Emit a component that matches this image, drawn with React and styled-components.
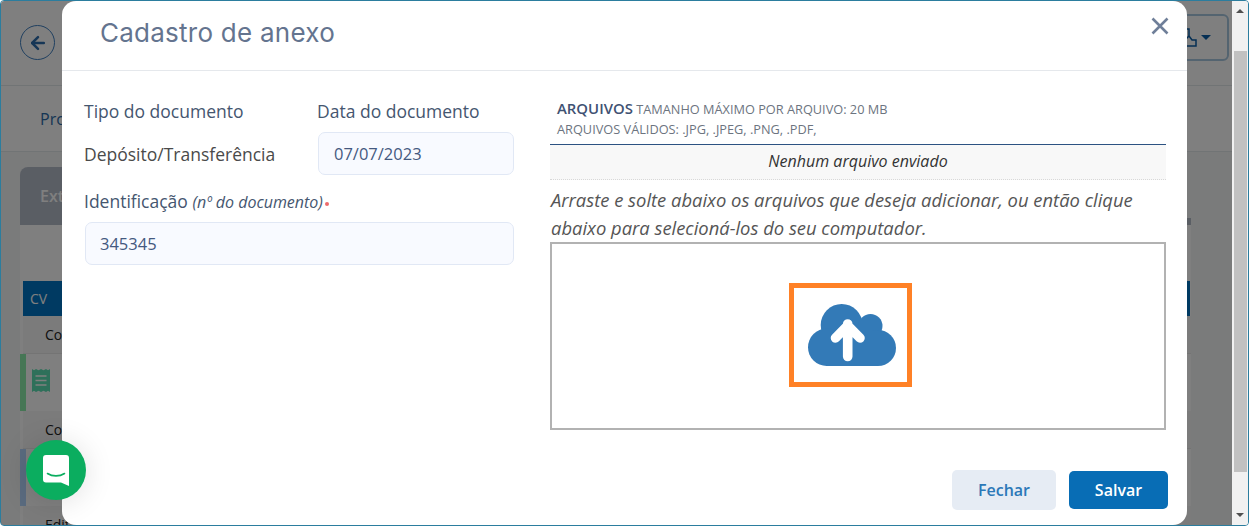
import React from 'react';
import styled, { createGlobalStyle } from 'styled-components';
import { ArrowLeft } from 'lucide-react';

const GlobalStyle = createGlobalStyle`
  html, body {
    margin: 0;
    padding: 0;
    height: 100%;
    overflow: hidden;
    background: #fff;
    font-family: 'Open Sans', sans-serif;
  }
  * { box-sizing: border-box; }
`;

const Frame = styled.div`
  position: relative;
  width: 1249px;
  height: 526px;
  display: flex;
  border: 1px solid #2b7d9e;
  border-radius: 4px;
  overflow: hidden;
  background: #f4f6f6;
`;

const Page = styled.div`
  flex: 1;
  min-width: 0;
  display: flex;
  flex-direction: column;
`;

const TopBar = styled.div`
  height: 85px;
  flex: none;
  display: flex;
  align-items: center;
  justify-content: space-between;
  padding: 0 3px 0 19px;
  background: #fff;
  border-bottom: 1px solid #e2e8ea;
`;

const BackButton = styled.div`
  width: 35px;
  height: 35px;
  margin-top: -1px;
  border: 1px solid #3f7fc0;
  border-radius: 50%;
  display: flex;
  align-items: center;
  justify-content: center;
  color: #2d6cac;
`;

const ToolButton = styled.div`
  width: 100px;
  height: 47px;
  margin-top: -11px;
  border: 2px solid #a9c8e0;
  border-radius: 6px;
  display: flex;
  align-items: center;
  justify-content: flex-end;
  gap: 4px;
  padding-right: 16px;
  color: #0a5ea8;
`;

const Caret = styled.span`
  width: 0;
  height: 0;
  border-left: 5px solid transparent;
  border-right: 5px solid transparent;
  border-top: 5px solid currentColor;
`;

const TabBar = styled.div`
  height: 66px;
  flex: none;
  display: flex;
  align-items: center;
  padding-left: 39px;
  font-size: 16px;
  color: #2c6aa8;
  background: #fff;
  border-bottom: 1px solid #e2e8ea;
`;

const Content = styled.div`
  padding: 15px 41px 0 19px;
  flex: 1;
  min-height: 0;
`;

const Card = styled.div`
  background: #fff;
  border-radius: 8px 8px 0 0;
  height: 400px;
`;

const CardTop = styled.div`
  height: 58px;
  display: flex;
  justify-content: space-between;
  align-items: flex-end;
  background: #f4f6f6;
`;

const CardHead = styled.div`
  width: 900px;
  height: 58px;
  display: flex;
  align-items: center;
  padding-left: 20px;
  background: #b4bcc9;
  border-radius: 8px 8px 0 0;
  font-size: 16px;
  font-weight: 600;
  color: #fff;
`;

const CardHeadEnd = styled.div`
  width: 8px;
  height: 7px;
  background: #b4bcc9;
`;

const TableHead = styled.div`
  height: 35px;
  margin: 56px 1px 0 3px;
  padding-left: 7px;
  display: flex;
  align-items: center;
  background: #0075c4;
  color: #fff;
  font-size: 14px;
`;

const SubRow = styled.div`
  height: 38px;
  margin-left: 3px;
  padding-left: 22px;
  display: flex;
  align-items: center;
  font-size: 14px;
  color: #222;
  background: #f7f7f7;
  border-bottom: 1px solid #e8e8e8;
`;

const StatusRow = styled.div`
  height: 57px;
  padding: 15px 0 0 6px;
  background: #fff;
  border-left: 6px solid ${p => p.$color};
  color: ${p => p.$icon};
`;

const ScrollBar = styled.div`
  width: 16px;
  flex: none;
  display: flex;
  flex-direction: column;
  align-items: center;
  background: #f1f1f1;
`;

const ScrollArrow = styled.span`
  width: 0;
  height: 0;
  margin: ${p => (p.$up ? '8px 0' : 'auto 0 8px')};
  border-left: 4px solid transparent;
  border-right: 4px solid transparent;
  border-${p => (p.$up ? 'bottom' : 'top')}: 4px solid #505050;
`;

const ScrollThumb = styled.div`
  width: 13px;
  height: 421px;
  margin-top: 30px;
  background: #c1c1c1;
`;

const Overlay = styled.div`
  position: absolute;
  inset: 0 16px 0 0;
  background: rgba(0, 0, 0, 0.5);
`;

const Modal = styled.div`
  position: absolute;
  top: 0;
  left: 61px;
  width: 1125px;
  height: 524px;
  display: flex;
  flex-direction: column;
  background: #fff;
  border-radius: 14px;
`;

const ModalHeader = styled.div`
  height: 70px;
  flex: none;
  display: flex;
  align-items: center;
  justify-content: space-between;
  padding: 0 18px 6px 38px;
  border-bottom: 1px solid #e5e8ec;
`;

const ModalTitle = styled.h1`
  margin: 0;
  font-family: Inter, sans-serif;
  font-size: 26px;
  font-weight: 400;
  letter-spacing: 0.25px;
  color: #64748f;
`;

const CloseButton = styled.div`
  display: flex;
  margin-bottom: 14px;
`;

const ModalBody = styled.div`
  flex: 1;
  min-height: 0;
  display: flex;
  gap: 36px;
  padding: 21px 21px 0 22px;
`;

const FormColumn = styled.div`
  width: 430px;
  flex: none;
  padding-top: 8px;
`;

const FormGrid = styled.div`
  display: grid;
  grid-template-columns: 233px 197px;
  grid-template-rows: 32px 43px;
`;

const Label = styled.div`
  font-size: 17.5px;
  line-height: 22px;
  color: #45566f;
  white-space: nowrap;
`;

const StaticValue = styled.div`
  align-self: center;
  font-size: 17.5px;
  color: #4a4a4a;
`;

const Hint = styled.span`
  font-size: 16px;
  font-style: italic;
`;

const Required = styled.span`
  display: inline-block;
  width: 4px;
  height: 4px;
  margin-left: 2px;
  vertical-align: 2px;
  border-radius: 50%;
  background: #ee6b6b;
`;

const Input = styled.input`
  display: block;
  width: 100%;
  height: 43px;
  padding: 0 15px;
  border: 1px solid #e1e8f5;
  border-radius: 7px;
  background: #f8faff;
  font-family: 'Open Sans', sans-serif;
  font-size: 16.5px;
  color: #44597f;
  outline: none;
`;

const DateInput = styled(Input)`
  width: 196px;
  margin-left: 1px;
`;

const IdField = styled.div`
  margin-top: 15px;
  & ${Label} { margin-bottom: 9px; }
  & ${Input} { width: 429px; margin-left: 1px; padding-left: 14px; }
`;

const FilesColumn = styled.div`
  flex: 1;
  min-width: 0;
`;

const FilesInfo = styled.div`
  padding: 6px 0 5px 7px;
  border-bottom: 1px solid #2c5282;
  font-size: 12.75px;
  line-height: 20px;
  color: #6c7480;
`;

const FilesTitle = styled.strong`
  font-size: 14.9px;
  font-weight: 600;
  color: #3f5273;
`;

const EmptyNote = styled.div`
  height: 35px;
  padding-bottom: 3px;
  display: flex;
  align-items: center;
  justify-content: center;
  background: #f8f8f8;
  border-bottom: 1px dotted #d8d8d8;
  font-size: 16px;
  font-style: italic;
  color: #333;
`;

const DropHint = styled.p`
  margin: 6px 0 0;
  padding-left: 1px;
  font-size: 18.4px;
  line-height: 28px;
  font-style: italic;
  color: #555;
`;

const DropZone = styled.div`
  height: 188px;
  display: flex;
  align-items: center;
  justify-content: center;
  border: 2px solid #b2b2b2;
`;

const UploadBox = styled.div`
  width: 123px;
  height: 104px;
  margin: 0 15px 2px 0;
  padding-left: 2px;
  display: flex;
  align-items: center;
  justify-content: center;
  border: 5px solid #ff8126;
`;

const ModalFooter = styled.div`
  height: 55px;
  flex: none;
  display: flex;
  justify-content: flex-end;
  align-items: flex-start;
  gap: 13px;
  padding: 0 19px 0 0;
`;

const Button = styled.button`
  width: ${p => (p.$primary ? '99px' : '104px')};
  height: ${p => (p.$primary ? '38px' : '40px')};
  margin-top: ${p => (p.$primary ? '1px' : '0')};
  border: none;
  border-radius: 5px;
  background: ${p => (p.$primary ? '#086db5' : '#e6ecf4')};
  color: ${p => (p.$primary ? '#fff' : '#2b78b8')};
  font-family: 'Open Sans', sans-serif;
  font-size: 16px;
  font-weight: 600;
`;

const ChatBubble = styled.div`
  position: absolute;
  left: 25px;
  top: 439px;
  width: 60px;
  height: 60px;
  display: flex;
  align-items: center;
  justify-content: center;
  border-radius: 50%;
  background: #0bad5f;
  box-shadow: 0 2px 30px rgba(0, 0, 0, 0.12);
`;

const CloseIcon = () => (
  <svg width="18" height="18" viewBox="0 0 18 18" fill="none" stroke="#6f7f99" strokeWidth="2.6">
    <path d="M1.5 1.5l15 15M16.5 1.5l-15 15" />
  </svg>
);

const CloudIcon = () => (
  <svg width="88" height="62" viewBox="0 0 88 62">
    <g fill="#337ab7">
      <circle cx="33.7" cy="21" r="21" />
      <circle cx="62.5" cy="22" r="12" />
      <circle cx="18.7" cy="43.3" r="18.7" />
      <circle cx="70" cy="44" r="18" />
      <path d="M18 30h52v32H18zM33 22h30v10H33z" />
    </g>
    <path
      d="M39.7 52.5V20M27.5 34L39.7 21.5 52 34"
      fill="none"
      stroke="#fff"
      strokeWidth="9.6"
      strokeLinecap="round"
      strokeLinejoin="round"
    />
  </svg>
);

const ReceiptIcon = () => (
  <svg width="18" height="23" viewBox="0 0 18 23">
    <path
      fill="currentColor"
      d="M0 0l2 1.2L4 0l2.5 1.2L9 0l2.5 1.2L14 0l2 1.2L18 0v23l-2-1.2-2 1.2-2.5-1.2L9 23l-2.5-1.2L4 23l-2-1.2L0 23z"
    />
    <path d="M3.5 7h11M3.5 11.5h11M3.5 16h11" stroke="#fff" strokeWidth="1.5" />
  </svg>
);

const StampIcon = () => (
  <svg width="22" height="24" viewBox="0 0 22 24" fill="none" stroke="currentColor" strokeWidth="1.5">
    <path d="M8 3h6v7l3 4h4v6H1v-6h4l3-4z" />
    <path d="M5 13l3 3 6-6" />
  </svg>
);

const ChatIcon = () => (
  <svg width="26" height="31" viewBox="0 0 26 31">
    <path
      fill="#fff"
      d="M3 0h20a3 3 0 0 1 3 3v28l-8-3.6H3a3 3 0 0 1-3-3V3a3 3 0 0 1 3-3z"
    />
    <path d="M4.5 18.5c5 3.2 12 3.2 17 0" fill="none" stroke="#0bad5f" strokeWidth="1.6" strokeLinecap="round" />
  </svg>
);

const App = () => (
  <>
    <GlobalStyle />
    <Frame>
      <Page>
        <TopBar>
          <BackButton>
            <ArrowLeft size={20} strokeWidth={3} />
          </BackButton>
          <ToolButton>
            <StampIcon />
            <Caret />
          </ToolButton>
        </TopBar>
        <TabBar>Processos</TabBar>
        <Content>
          <Card>
            <CardTop>
              <CardHead>Extrato</CardHead>
              <CardHeadEnd />
            </CardTop>
            <TableHead>CV</TableHead>
            <SubRow>Comprovante</SubRow>
            <StatusRow $color="#8cecaa" $icon="#5ce0b4">
              <ReceiptIcon />
            </StatusRow>
            <SubRow>Comprovante</SubRow>
            <StatusRow $color="#b4d6ff" />
            <SubRow>Editar</SubRow>
          </Card>
        </Content>
      </Page>
      <ScrollBar>
        <ScrollArrow $up />
        <ScrollThumb />
        <ScrollArrow />
      </ScrollBar>
      <Overlay />
      <Modal>
        <ModalHeader>
          <ModalTitle>Cadastro de anexo</ModalTitle>
          <CloseButton>
            <CloseIcon />
          </CloseButton>
        </ModalHeader>
        <ModalBody>
          <FormColumn>
            <FormGrid>
              <Label>Tipo do documento</Label>
              <Label>Data do documento</Label>
              <StaticValue>Depósito/Transferência</StaticValue>
              <DateInput defaultValue="07/07/2023" />
            </FormGrid>
            <IdField>
              <Label>
                Identificação <Hint>(nº do documento)</Hint>
                <Required />
              </Label>
              <Input defaultValue="345345" />
            </IdField>
          </FormColumn>
          <FilesColumn>
            <FilesInfo>
              <FilesTitle>ARQUIVOS</FilesTitle> TAMANHO MÁXIMO POR ARQUIVO: 20 MB
              <br />
              ARQUIVOS VÁLIDOS: .JPG, .JPEG, .PNG, .PDF,
            </FilesInfo>
            <EmptyNote>Nenhum arquivo enviado</EmptyNote>
            <DropHint>
              Arraste e solte abaixo os arquivos que deseja adicionar, ou então clique abaixo para selecioná-los do seu computador.
            </DropHint>
            <DropZone>
              <UploadBox>
                <CloudIcon />
              </UploadBox>
            </DropZone>
          </FilesColumn>
        </ModalBody>
        <ModalFooter>
          <Button>Fechar</Button>
          <Button $primary>Salvar</Button>
        </ModalFooter>
      </Modal>
      <ChatBubble>
        <ChatIcon />
      </ChatBubble>
    </Frame>
  </>
);

export default App;
